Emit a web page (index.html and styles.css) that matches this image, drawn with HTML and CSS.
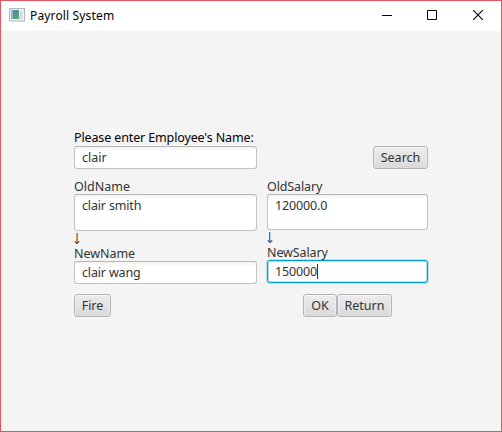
FILE: index.html
```html
<!DOCTYPE html>
<html lang="en">
<head>
<meta charset="utf-8">
<title>Payroll System</title>
<link rel="stylesheet" href="styles.css">
</head>
<body>
<div class="window">
  <header class="titlebar">
    <svg class="app-icon" width="16" height="14" viewBox="0 0 16 14">
      <defs>
        <linearGradient id="pane" x1="0" y1="0" x2="0.6" y2="1">
          <stop offset="0" stop-color="#4c7fae"/>
          <stop offset="1" stop-color="#57a679"/>
        </linearGradient>
      </defs>
      <rect x="0.5" y="0.5" width="15" height="12.5" fill="#eef0f2" stroke="#b1b6ba"/>
      <rect x="2" y="2" width="8" height="9" fill="url(#pane)"/>
      <rect x="2" y="2" width="2" height="9" fill="#8fb5c6"/>
      <rect x="11" y="2" width="3" height="9" fill="#e2ebec"/>
      <rect x="11" y="4" width="2" height="7" fill="#c6dbd9"/>
    </svg>
    <span class="title">Payroll System</span>
    <div class="controls">
      <svg width="46" height="30" viewBox="0 0 46 30"><path d="M18 14.500h10" stroke="#000"/></svg>
      <svg width="46" height="30" viewBox="0 0 46 30"><path d="M17.500 9.500h9v9h-9z" fill="none" stroke="#000"/></svg>
      <svg width="46" height="30" viewBox="0 0 46 30"><path d="M17.200 9.200l9.600 9.600M26.800 9.200l-9.600 9.600" fill="none" stroke="#000" stroke-width="1.100"/></svg>
    </div>
  </header>
  <main class="form">
    <div class="prompt"><span>Please enter Employee's Name:</span></div>
    <div class="columns">
      <div class="field"><span>clair</span></div>
      <div class="search-cell"><div class="button search"><span>Search</span></div></div>
    </div>
    <div class="columns details">
      <section>
        <div class="label"><span>OldName</span></div>
        <div class="field area"><span class="tight">clair smith</span></div>
        <div class="arrow"><svg width="7" height="15" viewBox="0 0 7 15"><path d="M3.500 2v10" stroke="#6c8fb0"/><path d="M2.500 2v10" stroke="#dc9a55"/><path d="M0.800 10.300l2.200 2.200 2.200-2.200" fill="none" stroke="#4a4038" stroke-width="1.200"/></svg></div>
        <div class="label"><span class="wide">NewName</span></div>
        <div class="field"><span class="tight">clair wang</span></div>
      </section>
      <section>
        <div class="label"><span class="narrow">OldSalary</span></div>
        <div class="field area short"><span class="tight">120000.0</span></div>
        <div class="arrow"><svg width="7" height="15" viewBox="0 0 7 15"><path d="M2.500 2v10" stroke="#3d78b8"/><path d="M3.500 2v10" stroke="#a9cdea"/><path d="M0.800 10.300l2.200 2.200 2.200-2.200" fill="none" stroke="#34506e" stroke-width="1.200"/></svg></div>
        <div class="label"><span class="narrow">NewSalary</span></div>
        <div class="field focused"><span class="tight">150000</span><i class="caret"></i></div>
      </section>
    </div>
    <div class="columns actions">
      <div class="group"><div class="button fire"><span>Fire</span></div></div>
      <div class="group end"><div class="button ok"><span>OK</span></div><div class="button return"><span>Return</span></div></div>
    </div>
  </main>
</div>
</body>
</html>
```
FILE: styles.css
```css
* { box-sizing: border-box; }
body {
  margin: 0;
  font: 12.500px/15px "Noto Sans", "Open Sans", sans-serif;
  color: #333;
}
.window {
  width: 502px;
  height: 432px;
  border: 1px solid #e55561;
  background: #f4f4f4;
}
.titlebar {
  display: flex;
  align-items: center;
  height: 30px;
  background: #fff;
  color: #000;
}
.app-icon { margin: 0 5px 2px 8px; }
.title { font-size: 12px; letter-spacing: 0.15px; padding-bottom: 1px; }
.controls { display: flex; margin-left: auto; margin-right: -1px; }
.form { padding: 99px 73px 0; }
.prompt {
  height: 16px;
  line-height: 16px;
  color: #000;
  white-space: nowrap;
  letter-spacing: -0.13px;
}
.columns {
  display: grid;
  grid-template-columns: 183px 161px;
  column-gap: 10px;
}
.field {
  display: flex;
  height: 23px;
  padding: 3px 7px;
  border: 1px solid #c3c3c3;
  border-top-color: #b5b5b5;
  border-radius: 3px;
  background: linear-gradient(#f3f3f3, #fff 4px);
}
.tight { letter-spacing: -0.16px; }
.narrow { letter-spacing: -0.12px; }
.wide { letter-spacing: -0.05px; }
.area { height: 37px; }
.short { height: 36px; }
.focused {
  border-color: #039ed3;
  box-shadow: 0 0 0 1px #b9e2f1, inset 0 0 0 1px #b9e2f1;
  background: #fff;
}
.caret { width: 1px; height: 15px; background: #333; }
.details { margin-top: 10px; }
.label { height: 15px; white-space: nowrap; }
.arrow { height: 15px; }
.arrow svg { display: block; }
.button {
  display: flex;
  justify-content: center;
  height: 23px;
  padding-top: 3px;
  border: 1px solid #b5b5b5;
  border-radius: 3px;
  background: linear-gradient(#ececec, #dadada);
  box-shadow: inset 0 1px #f7f7f7, inset 1px 0 #ececec, inset -1px 0 #ececec;
}
.search-cell, .group { display: flex; }
.search-cell { justify-content: flex-end; }
.search { width: 55px; }
.fire { width: 37px; }
.ok { width: 34px; }
.return { width: 55px; }
.actions { margin-top: 10px; }
.end { padding-left: 36px; }
```
